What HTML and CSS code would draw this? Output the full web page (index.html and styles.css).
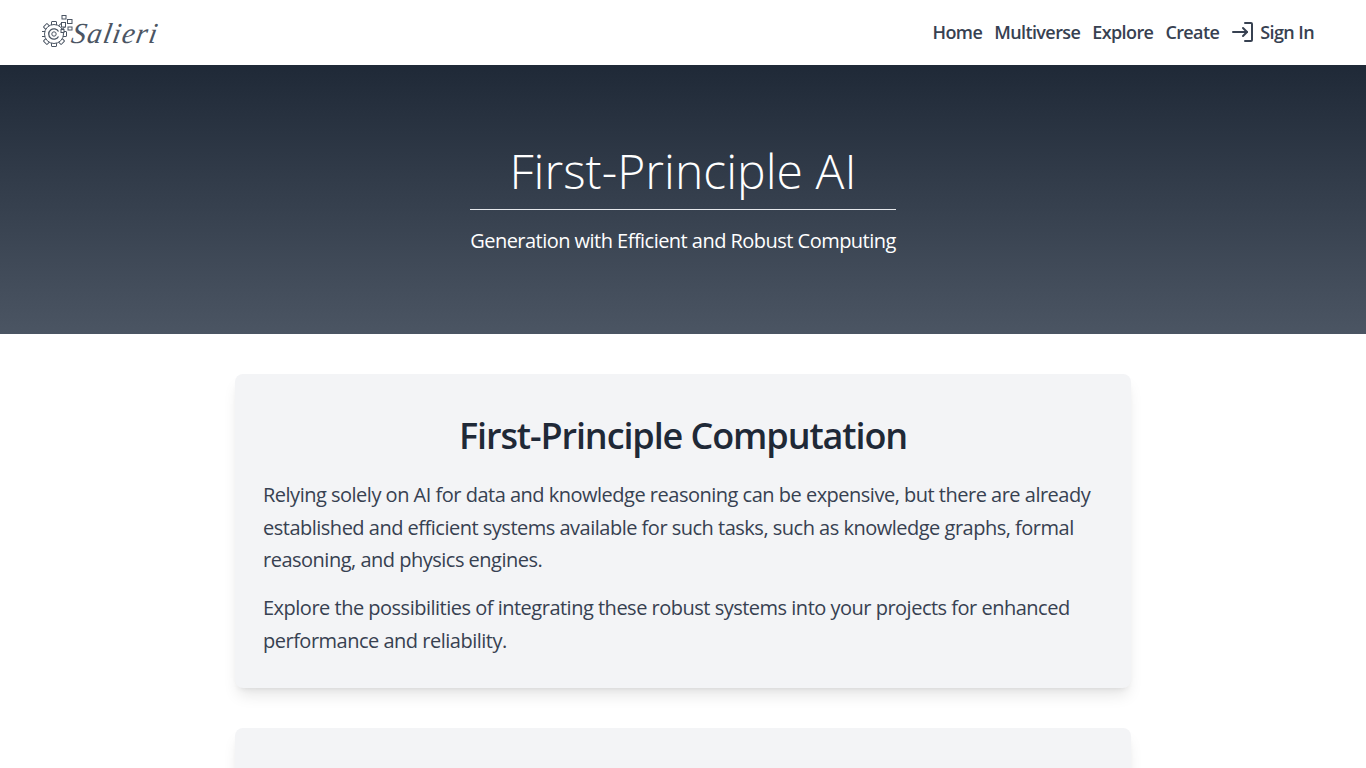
FILE: index.html
```html
<!DOCTYPE html>
<html lang="en">
<head>
    <meta charset="UTF-8">
    <meta name="viewport" content="width=device-width, initial-scale=1.0">
    <title>Salieri</title>
    <link rel="stylesheet" href="styles.css">
</head>
<body>

<header class="navbar">
    <a class="logo" href="#">
        <svg class="logo-icon" width="32" height="36" viewBox="0 0 32 36" fill="none" stroke="#4b5563" stroke-width="1">
            <defs>
                <rect id="tooth" x="9.500" y="7.500" width="5" height="5" rx="0.500"/>
            </defs>
            <use href="#tooth"/>
            <use href="#tooth" transform="rotate(45 12 20)"/>
            <use href="#tooth" transform="rotate(90 12 20)"/>
            <use href="#tooth" transform="rotate(135 12 20)"/>
            <use href="#tooth" transform="rotate(180 12 20)"/>
            <use href="#tooth" transform="rotate(225 12 20)"/>
            <use href="#tooth" transform="rotate(270 12 20)"/>
            <use href="#tooth" transform="rotate(315 12 20)"/>
            <circle cx="12" cy="20" r="9.500" fill="white"/>
            <path d="M16.500 17.500a5.200 5.200 0 1 0 0 5" stroke-width="1.300"/>
            <circle cx="12" cy="20" r="2.200"/>
            <rect x="20" y="1.500" width="4" height="3.500" fill="white"/>
            <rect x="25.500" y="5.500" width="4.500" height="4" fill="white"/>
            <rect x="19.500" y="8.500" width="4" height="4.500" fill="white"/>
            <rect x="26" y="13" width="4" height="3" fill="white"/>
            <rect x="19" y="15.500" width="3" height="3" fill="white"/>
        </svg>
        <span class="logo-text">Salieri</span>
    </a>
    <nav class="nav-links">
        <a href="#">Home</a>
        <a href="#">Multiverse</a>
        <a href="#">Explore</a>
        <a href="#">Create</a>
        <a class="sign-in" href="#">
            <svg width="24" height="24" viewBox="0 0 24 24" fill="none" stroke="currentColor" stroke-width="2" stroke-linecap="round" stroke-linejoin="round">
                <path d="M14 3h6a1 1 0 0 1 1 1v16a1 1 0 0 1-1 1h-6"/>
                <path d="M2 12h14"/>
                <path d="M12 8l4 4-4 4"/>
            </svg>
            Sign In
        </a>
    </nav>
</header>

<section class="hero">
    <div class="hero-inner">
        <h1>First-Principle AI</h1>
        <p>Generation with Efficient and Robust Computing</p>
    </div>
</section>

<main class="content">
    <section class="card">
        <h2>First-Principle Computation</h2>
        <p>Relying solely on AI for data and knowledge reasoning can be expensive, but there are already established and efficient systems available for such tasks, such as knowledge graphs, formal reasoning, and physics engines.</p>
        <p>Explore the possibilities of integrating these robust systems into your projects for enhanced performance and reliability.</p>
    </section>
    <section class="card card-empty"></section>
</main>

</body>
</html>
```

FILE: styles.css
```css
body {
    font-family: 'Open Sans', 'Noto Sans', sans-serif;
    background-color: white;
    color: #1f2937;
    margin: 0;
    padding: 0;
}
a {
    color: inherit;
    text-decoration: none;
}
.navbar {
    height: 65px;
    box-sizing: border-box;
    padding: 0 52px 2px 42px;
    display: flex;
    justify-content: space-between;
    align-items: center;
    background-color: white;
}
.logo {
    display: flex;
    align-items: center;
}
.logo-icon {
    display: block;
}
.logo-text {
    font-family: 'Liberation Serif', serif;
    font-style: italic;
    font-size: 29px;
    letter-spacing: 1.3px;
    color: #4b5563;
    margin: 3px 0 0 -2px;
    transform: skewX(-10deg);
}
.nav-links {
    display: flex;
    align-items: center;
    gap: 12px;
    font-size: 18px;
    font-weight: 550;
    color: #374151;
    letter-spacing: -0.6px;
}
.sign-in {
    display: flex;
    align-items: center;
    gap: 5px;
}
.hero {
    height: 269px;
    box-sizing: border-box;
    padding-top: 76px;
    background-image: linear-gradient(to bottom, #1f2937, #4b5563);
    color: white;
    display: flex;
    justify-content: center;
}
.hero-inner {
    text-align: center;
}
.hero h1 {
    font-size: 48px;
    font-weight: 350;
    line-height: 60px;
    letter-spacing: 0.05px;
    margin: 0;
    padding-bottom: 8px;
    border-bottom: 1px solid #e5e7eb;
}
.hero p {
    font-size: 20px;
    line-height: 28px;
    letter-spacing: -0.53px;
    margin: 17px 0 0;
}
.content {
    width: 896px;
    margin: 0 auto;
    padding: 40px 0;
    display: flex;
    flex-direction: column;
    gap: 40px;
}
.card {
    box-sizing: border-box;
    padding: 32px 28px 31px;
    background-color: #f3f4f6;
    border-radius: 8px;
    box-shadow: 0 10px 15px -3px rgba(0, 0, 0, 0.1), 0 4px 6px -4px rgba(0, 0, 0, 0.1);
}
.card-empty {
    height: 300px;
}
.card h2 {
    font-size: 36px;
    font-weight: 550;
    line-height: 60px;
    letter-spacing: -1.1px;
    text-align: center;
    color: #1f2937;
    margin: 0 0 13px;
}
.card p {
    font-size: 20px;
    line-height: 32.5px;
    letter-spacing: -0.5px;
    color: #374151;
    margin: 0 0 15.5px;
}
.card p:last-child {
    margin-bottom: 0;
}
```
